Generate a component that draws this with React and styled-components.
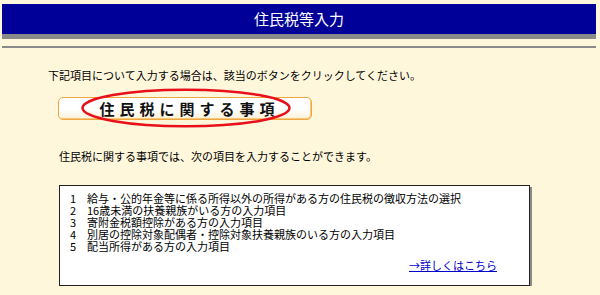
import React from 'react';
import styled, { createGlobalStyle } from 'styled-components';

const GlobalStyle = createGlobalStyle`
  html, body {
    margin: 0;
    padding: 0;
    background: #fff7dc;
  }
  body {
    font-family: "Noto Sans CJK JP", "Noto Sans", sans-serif;
    color: #000;
  }
`;

const Page = styled.div`
  padding: 4px 4px 0 2px;
  width: 594px;
`;

const TitleBar = styled.h1`
  margin: 0;
  height: 30px;
  background: #000099;
  border-bottom: 5px solid #8a8a8a;
  color: #fff;
  font-size: 15px;
  font-weight: normal;
  line-height: 30px;
  text-align: center;
`;

const Rule = styled.div`
  margin-top: 7px;
  height: 2px;
  background: #8a8a8a;
`;

const Content = styled.div`
  padding: 21px 0 0 46px;
`;

const Lead = styled.p`
  margin: 0;
  font-size: 11px;
  line-height: 12px;
`;

const ButtonWrap = styled.div`
  position: relative;
  margin: 16px 0 0 10px;
  width: 254px;
`;

const TopicButton = styled.button`
  display: block;
  width: 254px;
  height: 23px;
  padding: 0 0 0 9px;
  border: 1px solid #f0a640;
  border-radius: 5px;
  background: linear-gradient(#ffffff 0%, #ffffff 55%, #fdf0d6 100%);
  box-shadow: inset -1px -1px 0 #f7c77a;
  font-family: inherit;
  font-size: 15px;
  font-weight: bold;
  letter-spacing: 5px;
  line-height: 21px;
  color: #111;
  cursor: pointer;
`;

const Mark = styled.svg`
  position: absolute;
  left: 23px;
  top: -9px;
  pointer-events: none;
`;

const Note = styled.p`
  margin: 30px 0 0 11px;
  font-size: 11px;
  line-height: 12px;
`;

const ItemBox = styled.div`
  margin: 23px 0 0 11px;
  width: 471px;
  height: 101px;
  box-sizing: border-box;
  padding: 6px 0 0 10px;
  background: #fff;
  border: 1px solid #222;
  box-shadow: 2px 2px 0 #8a8a8a;
`;

const ItemList = styled.ol`
  margin: 0;
  padding: 0;
  list-style: none;
`;

const Item = styled.li`
  display: flex;
  font-size: 11px;
  line-height: 12px;
`;

const Num = styled.span`
  width: 17px;
  flex: none;
`;

const MoreRow = styled.div`
  display: flex;
  justify-content: flex-end;
  padding: 7px 32px 0 0;
`;

const MoreLink = styled.a`
  color: #0000cc;
  font-size: 11px;
  line-height: 12px;
  text-decoration: underline;
`;

const items = [
  '給与・公的年金等に係る所得以外の所得がある方の住民税の徴収方法の選択',
  '16歳未満の扶養親族がいる方の入力項目',
  '寄附金税額控除がある方の入力項目',
  '別居の控除対象配偶者・控除対象扶養親族のいる方の入力項目',
  '配当所得がある方の入力項目',
];

export default function App() {
  return (
    <>
      <GlobalStyle />
      <Page>
        <TitleBar>住民税等入力</TitleBar>
        <Rule />
        <Content>
          <Lead>下記項目について入力する場合は、該当のボタンをクリックしてください。</Lead>
          <ButtonWrap>
            <TopicButton type="button">住民税に関する事項</TopicButton>
            <Mark width="210" height="40" viewBox="0 0 210 40">
              <ellipse cx="105" cy="20" rx="103.5" ry="18.3" fill="none" stroke="#e8101a" strokeWidth="2.5" />
            </Mark>
          </ButtonWrap>
          <Note>住民税に関する事項では、次の項目を入力することができます。</Note>
          <ItemBox>
            <ItemList>
              {items.map((text, i) => (
                <Item key={i}>
                  <Num>{i + 1}</Num>
                  {text}
                </Item>
              ))}
            </ItemList>
            <MoreRow>
              <MoreLink href="#">→詳しくはこちら</MoreLink>
            </MoreRow>
          </ItemBox>
        </Content>
      </Page>
    </>
  );
}
